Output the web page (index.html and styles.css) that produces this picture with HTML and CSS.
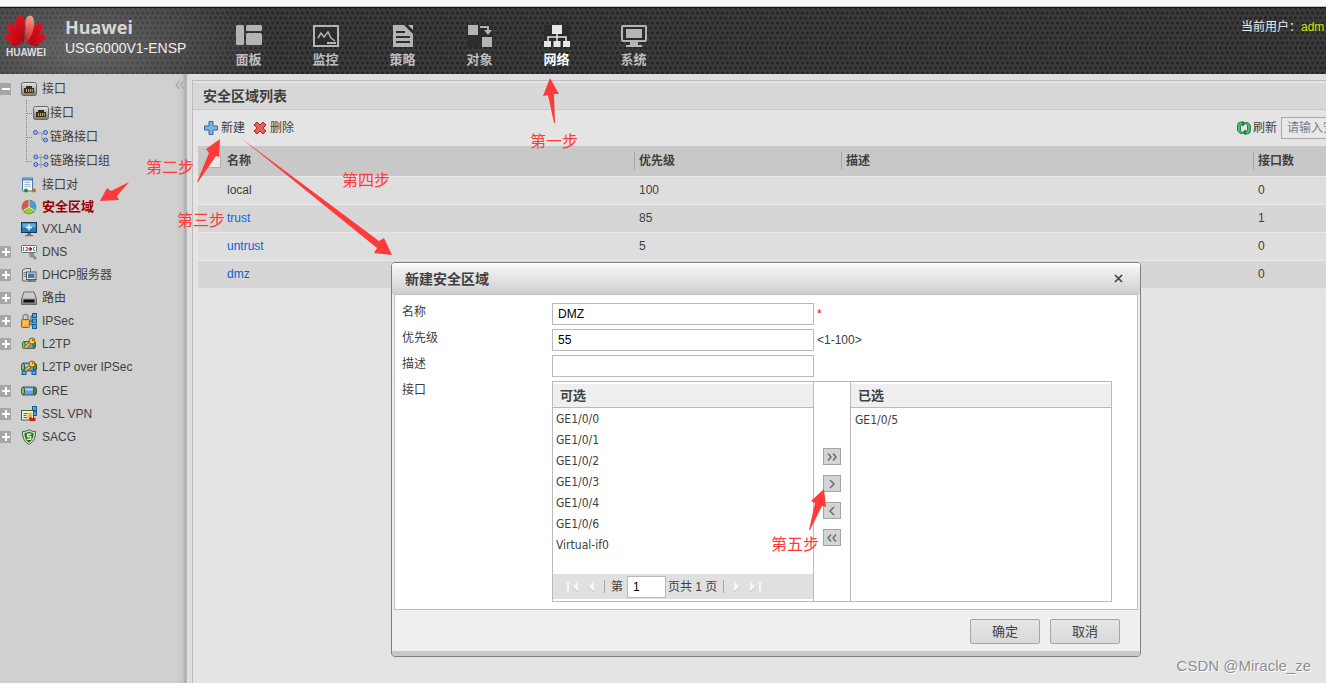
FILE: index.html
```html
<!DOCTYPE html>
<html lang="zh-CN">
<head>
<meta charset="utf-8">
<title>USG6000V1-ENSP</title>
<link rel="stylesheet" href="styles.css">
</head>
<body>
<svg class="defs" aria-hidden="true">
  <defs>
    <linearGradient id="petal" x1="0" y1="0" x2="0" y2="1"><stop offset="0" stop-color="#e01420"/><stop offset="1" stop-color="#b8000e"/></linearGradient>
    <linearGradient id="petal-light" x1="0" y1="0" x2="0" y2="1"><stop offset="0" stop-color="#f2a08c"/><stop offset="1" stop-color="#d01820"/></linearGradient>
    <linearGradient id="metal" x1="0" y1="0" x2="0" y2="1"><stop offset="0" stop-color="#e8e8e8"/><stop offset="1" stop-color="#777"/></linearGradient>
    <symbol id="i-port" viewBox="0 0 16 16"><rect x=".5" y="1.500" width="15" height="13" rx="2" fill="url(#metal)" stroke="#666"/><path d="M3 12V7h2V5h6v2h2v5z" fill="#33302a"/><path d="M5.500 8v3M7.500 8v3M9.500 8v3M11.300 8v3" stroke="#dca53a"/></symbol>
    <symbol id="i-link" viewBox="0 0 16 16"><path d="M5 4h4v7h3" fill="none" stroke="#999"/><g fill="#9db5ee" stroke="#3a5cab"><circle cx="2.500" cy="3.500" r="2"/><circle cx="12.500" cy="3.500" r="2"/><circle cx="12.500" cy="11" r="2"/></g></symbol>
    <symbol id="i-linkgroup" viewBox="0 0 16 16"><path d="M5 4.500h6M5 11.500h6M8 1v14" fill="none" stroke="#999"/><g fill="#9db5ee" stroke="#3a5cab"><circle cx="2.800" cy="4" r="2"/><circle cx="13" cy="4" r="2"/><circle cx="2.800" cy="11.500" r="2"/><circle cx="13" cy="11.500" r="2"/></g></symbol>
    <symbol id="i-pair" viewBox="0 0 16 16"><path d="M1.500 1h10v13h-10z" fill="#f4f8fd" stroke="#4a7ab5"/><path d="M2 2.500h9" stroke="#4a8ad0" stroke-width="2"/><path d="M3.500 5.500h6M3.500 7.500h6M3.500 9.500h6" stroke="#a9b4c2"/><path d="M5 13.500h7" stroke="#aaa"/><circle cx="5" cy="13.500" r="2" fill="#19951d"/><circle cx="13" cy="13.500" r="2" fill="#d8620c"/></symbol>
    <symbol id="i-pie" viewBox="0 0 16 16"><circle cx="8" cy="8" r="7.300" fill="#6d7f55"/><path d="M8 8V1.500a6.500 6.500 0 0 1 5.600 9.800z" fill="#39a0dc"/><path d="M8 8V1.500A6.500 6.500 0 0 0 2.400 11.300z" fill="#ec4f3c"/><path d="M8 8l5.600 3.300a6.500 6.500 0 0 1-11.200 0z" fill="#9acb33"/><path d="M8 1v7l6 3.500M8 8l-6 3.500" stroke="#eee" stroke-width=".8" fill="none"/></symbol>
    <symbol id="i-screen" viewBox="0 0 16 16"><rect x=".5" y="1.500" width="15" height="10" fill="#2479bd" stroke="#17384f"/><path d="M1.500 2.500h13v4h-13z" fill="#5faee2"/><path d="M8 3.500v6M5 6.500h6" stroke="#fff" stroke-width="1.400"/><path d="M6 12h4v2h2v1.300H4V14h2z" fill="#777"/></symbol>
    <symbol id="i-dns" viewBox="0 0 16 16"><rect x=".5" y="1.500" width="15" height="7" rx="1" fill="#fff" stroke="#5f7380"/><path d="M2.500 3v4M4.500 3.500h2v1.500l-2 1.500h2.500" stroke="#3682b0" fill="none"/><path d="M7 5h3M9 3.200L11 5 9 6.800z" stroke="#c01020" fill="#c01020"/><path d="M14 3.500h-1.500v3H14" stroke="#4a9a22" fill="none"/><path d="M8 9h5v2l3 3-2 2-3-3-2 1z" fill="#88919b"/></symbol>
    <symbol id="i-dhcp" viewBox="0 0 16 16"><path d="M1.500 3l3-1.500h5V14h-8z" fill="#d8dadb" stroke="#666"/><path d="M2.500 5.500h3M2.500 7.500h3M2.500 9.500h3" stroke="#777"/><rect x="5.500" y="5" width="9.500" height="7.500" fill="#e7e7e7" stroke="#555"/><rect x="7" y="6.500" width="6.500" height="4.500" fill="#3e78ae"/><path d="M7 14h8" stroke="#666" stroke-width="1.500"/></symbol>
    <symbol id="i-router" viewBox="0 0 16 16"><path d="M3 2h10l2.500 7v5.500H.5V9z" fill="url(#metal)" stroke="#666"/><path d="M3.500 3h9l1.500 5H2z" fill="#ccc"/><path d="M2.500 9.500h11v3h-11z" fill="#111"/></symbol>
    <symbol id="i-ipsec" viewBox="0 0 16 16"><path d="M2 7V4a2.500 2.500 0 0 1 5 0v3" fill="none" stroke="#8b8b8b" stroke-width="1.600"/><rect x=".5" y="6.500" width="8" height="8" rx="1" fill="#efac3c" stroke="#9a6416"/><path d="M2 9h5M2 11h5" stroke="#fbd58a"/><path d="M9 8h2M12 3h-2v9h2" stroke="#456" fill="none"/><g fill="#48a8e0" stroke="#175f92"><rect x="11.500" y=".5" width="4" height="4"/><rect x="11.500" y="6" width="4" height="4"/><rect x="11.500" y="11.500" width="4" height="4"/></g></symbol>
    <symbol id="i-tube" viewBox="0 0 16 16"><path d="M2 4h12v8H2z" fill="#6d9fd4" stroke="#37557b"/><path d="M3 5.500h10v2H3z" fill="#b4d2f0"/><ellipse cx="2" cy="8" rx="1.600" ry="4" fill="#8cc078" stroke="#2c5d2c"/><ellipse cx="14" cy="8" rx="1.600" ry="4" fill="#4c8b45" stroke="#2c5d2c"/></symbol>
    <symbol id="i-key" viewBox="0 0 16 16"><path d="M4 12l7-6.500" stroke="#8c5d08" stroke-width="3.400"/><path d="M4 12l7-6.500" stroke="#f3be3b" stroke-width="1.800"/><circle cx="11" cy="5" r="3" fill="#f5cb55" stroke="#8c5d08"/><circle cx="11.800" cy="4.200" r=".9" fill="#8c5d08"/></symbol>
    <symbol id="i-l2tp" viewBox="0 0 16 16"><svg y="2" width="16" height="14"><use href="#i-tube"/></svg><use href="#i-key"/></symbol>
    <symbol id="i-l2tpipsec" viewBox="0 0 16 16"><use href="#i-tube"/><use href="#i-key"/><path d="M3 10v2M13 10v2" stroke="#456"/><g fill="#4cb0e4" stroke="#176393"><rect x="1" y="12" width="4" height="3.500"/><rect x="11" y="12" width="4" height="3.500"/></g></symbol>
    <symbol id="i-sslvpn" viewBox="0 0 16 16"><g fill="#48a8e0" stroke="#175f92"><rect x="11.500" y=".5" width="4" height="4"/><rect x="11.500" y="5.500" width="4" height="4"/></g><rect x=".5" y="4.500" width="12" height="9.500" fill="#eef5e5" stroke="#2d6b32"/><path d="M2.500 7.500h4M2.500 9.500h3M2.500 11.500h4" stroke="#3e7a3c"/><circle cx="9" cy="9" r="2.500" fill="#f3b52c"/><path d="M7.500 12l2-1 3 1.500 2-1v3l-2 1-1.500-1-1.500 1z" fill="#cc1c12"/></symbol>
    <symbol id="i-shield" viewBox="0 0 16 16"><path d="M8 .7C5.500 2.300 3.500 2.600 1.500 2.600 1.500 9 3.500 13 8 15.400 12.500 13 14.500 9 14.500 2.600 12.500 2.600 10.500 2.300 8 .7z" fill="#e4eadf" stroke="#4b554a"/><path d="M8 2.500c-1.800 1-3.200 1.400-4.700 1.500C3.500 9 5 12 8 13.800 11 12 12.500 9 12.700 4 11.200 3.900 9.800 3.500 8 2.500z" fill="#23781b"/><path d="M10.200 5.200H6.600v2.400h3v2.600H5.900" fill="none" stroke="#dff0c8" stroke-width="1.500"/></symbol>
  </defs>
</svg>

<div class="strip"></div>
<header class="topbar">
  <div class="brand">
    <svg class="logo" viewBox="0 0 40 31" aria-hidden="true">
      <g fill="url(#petal)">
        <path transform="translate(19 28) rotate(-8)" d="M0 0C-7-9-7-24-2-27.500 2-28 4-25 3.500-20z"/>
        <path transform="translate(17.500 28) rotate(-32)" d="M0 0C-6-8-7-19-3-24 0-25 3-22 3-17z"/>
        <path transform="translate(16.500 29) rotate(-60)" d="M0 0C-5-6-6-15-2-19 1-19 3-16 3-12z"/>
        <path transform="translate(22.500 28) rotate(32)" d="M0 0C6-8 7-19 3-24 0-25-3-22-3-17z"/>
        <path transform="translate(23.500 29) rotate(60)" d="M0 0C5-6 6-15 2-19-1-19-3-16-3-12z"/>
        <path d="M16 30H5c1.500 1 4 1.500 6 .5zM24 30h11c-1.500 1-4 1.500-6 .5z"/>
        <path d="M16 29.500C11 28 7 27 4 26c1 4 5 6 12 3.500zM24 29.500c5-1.500 9-2.500 12-3.500-1 4-5 6-12 3.500z"/>
      </g>
      <path transform="translate(21 28) rotate(8)" d="M0 0C7-9 7-24 2-27.500-2-28-4-25-3.500-20z" fill="url(#petal-light)"/>
    </svg>
    <span class="logo-text">HUAWEI</span>
  </div>
  <div class="product">
    <strong class="product-name">Huawei</strong>
    <span class="product-model">USG6000V1-ENSP</span>
  </div>
  <nav class="mainnav">
    <a class="nav-item" href="#"><svg class="nav-icon" viewBox="0 0 26 22"><g fill="#b4b4b4"><rect width="8" height="20" rx="1.500"/><rect x="10" width="16" height="6" rx="1.500"/><rect x="10" y="8" width="16" height="12" rx="1.500"/></g></svg>面板</a>
    <a class="nav-item" href="#"><svg class="nav-icon" viewBox="0 0 26 22"><rect x="1" y="1" width="24" height="20" fill="#2c2c2c" stroke="#b4b4b4" stroke-width="2"/><path d="M5 13l3-5 3 4 4-5 3 6 4 3" fill="none" stroke="#b4b4b4" stroke-width="1.500"/><path d="M14 18h9" stroke="#b4b4b4" stroke-width="2"/></svg>监控</a>
    <a class="nav-item" href="#"><svg class="nav-icon" viewBox="0 0 26 22"><path d="M3 0h20v22H3z" fill="#2c2c2c"/><path d="M3 0h11l9 9v13H3z" fill="#b4b4b4"/><path d="M6 7h9M6 12h14M6 17h14" stroke="#2c2c2c" stroke-width="2"/><path d="M18 0h5v5z" fill="#b4b4b4"/></svg>策略</a>
    <a class="nav-item" href="#"><svg class="nav-icon" viewBox="0 0 26 22"><path d="M0 0h26v22H0z" fill="#2c2c2c"/><path d="M1 0h10v10H1zM15 12h10v10H15z" fill="#b4b4b4"/><path d="M13 2h8v4" fill="none" stroke="#b4b4b4" stroke-width="2"/><path d="M17 5h8l-4 5z" fill="#b4b4b4"/></svg>对象</a>
    <a class="nav-item nav-item-active" href="#"><svg class="nav-icon" viewBox="0 0 26 22"><path d="M0 0h26v22H0z" fill="#2c2c2c"/><path d="M8 0h10v9H8zM0 16h7v6H0zM9.500 16h7v6h-7zM19 16h7v6h-7z" fill="#e6e6e6"/><path d="M13 9v7M4 16v-4h18v4" fill="none" stroke="#e6e6e6" stroke-width="1.500"/></svg>网络</a>
    <a class="nav-item" href="#"><svg class="nav-icon" viewBox="0 0 26 22"><rect x="1" y="1" width="24" height="15" rx="1" fill="#2c2c2c" stroke="#b4b4b4" stroke-width="2"/><path d="M5 4h16v9H5zM9 17h8v3h4v2H5v-2h4z" fill="#b4b4b4"/></svg>系统</a>
  </nav>
  <div class="user">当前用户：<span class="user-name">adm</span></div>
</header>

<div class="workspace">
  <aside class="sidebar">
    <ul class="tree">
      <li class="node"><span class="toggle toggle-open"></span><svg class="icon"><use href="#i-port"/></svg>接口</li>
      <li>
        <ul class="subtree">
          <li class="child"><svg class="icon"><use href="#i-port"/></svg>接口</li>
          <li class="child"><svg class="icon"><use href="#i-link"/></svg>链路接口</li>
          <li class="child"><svg class="icon"><use href="#i-linkgroup"/></svg>链路接口组</li>
        </ul>
      </li>
      <li class="node leaf"><svg class="icon"><use href="#i-pair"/></svg>接口对</li>
      <li class="node leaf selected"><svg class="icon"><use href="#i-pie"/></svg>安全区域</li>
      <li class="node leaf"><svg class="icon"><use href="#i-screen"/></svg>VXLAN</li>
      <li class="node"><span class="toggle"></span><svg class="icon"><use href="#i-dns"/></svg>DNS</li>
      <li class="node"><span class="toggle"></span><svg class="icon"><use href="#i-dhcp"/></svg>DHCP服务器</li>
      <li class="node"><span class="toggle"></span><svg class="icon"><use href="#i-router"/></svg>路由</li>
      <li class="node"><span class="toggle"></span><svg class="icon"><use href="#i-ipsec"/></svg>IPSec</li>
      <li class="node"><span class="toggle"></span><svg class="icon"><use href="#i-l2tp"/></svg>L2TP</li>
      <li class="node leaf leaf-tall"><svg class="icon"><use href="#i-l2tpipsec"/></svg>L2TP over IPSec</li>
      <li class="node"><span class="toggle"></span><svg class="icon"><use href="#i-tube"/></svg>GRE</li>
      <li class="node"><span class="toggle"></span><svg class="icon"><use href="#i-sslvpn"/></svg>SSL VPN</li>
      <li class="node"><span class="toggle"></span><svg class="icon"><use href="#i-shield"/></svg>SACG</li>
    </ul>
    <button class="collapse" type="button" aria-label="收起"><svg viewBox="0 0 10 10"><path d="M4.500 1L1 5l3.500 4M9 1L5.500 5 9 9" fill="none" stroke="#aaa" stroke-width="1.300"/></svg></button>
  </aside>

  <main class="panel">
    <h1 class="panel-title">安全区域列表</h1>
    <div class="toolbar">
      <button class="tool" type="button"><svg class="tool-icon" viewBox="0 0 14 14"><path d="M5 .5h4V5h4.500v4H9v4.500H5V9H.5V5H5z" fill="#7fb2dd" stroke="#356a9d"/></svg>新建</button>
      <button class="tool" type="button"><svg class="tool-icon" viewBox="0 0 14 14"><path d="M4 1l3 3 3-3 3 3-3 3 3 3-3 3-3-3-3 3-3-3 3-3-3-3z" fill="#e0605a" stroke="#a32826"/></svg>删除</button>
      <button class="tool tool-right" type="button"><svg class="tool-icon" viewBox="0 0 14 14"><g fill="#4fb873" stroke="#17783a" stroke-width=".9"><path d="M6.500 1H4Q.5 1 .5 5v4.500L3 12.500h2.500L3.500 9.500V5.500Q3.500 4 5 4h1.500z"/><path d="M7.500 13H10q3.500 0 3.500-4V4.500L11 1.500H8.500l2 3v4q0 1.500-1.500 1.500H7.500z"/></g><path d="M5.500 0v5.500L9 2.500zM8.500 14V8.500L5 11.500z" fill="#17783a"/></svg>刷新</button>
      <input class="search" type="text" aria-label="搜索" placeholder="请输入安全区域名称">
    </div>
    <table class="zones">
      <thead>
        <tr><th class="col-check"><input class="check" type="checkbox" aria-label="全选"></th><th class="col-name">名称</th><th class="col-priority divided">优先级</th><th class="divided">描述</th><th class="col-count divided">接口数</th></tr>
      </thead>
      <tbody>
        <tr><td></td><td>local</td><td>100</td><td></td><td>0</td></tr>
        <tr><td></td><td><a href="#">trust</a></td><td>85</td><td></td><td>1</td></tr>
        <tr><td></td><td><a href="#">untrust</a></td><td>5</td><td></td><td>0</td></tr>
        <tr><td></td><td><a href="#">dmz</a></td><td></td><td></td><td>0</td></tr>
      </tbody>
    </table>
  </main>
</div>

<section class="dialog" role="dialog" aria-labelledby="dialog-title">
  <div class="dialog-head">
    <h2 class="dialog-title" id="dialog-title">新建安全区域</h2>
    <button class="close" type="button" aria-label="关闭"><svg viewBox="0 0 9 9"><path d="M1 1l7 7M8 1L1 8" stroke="#444" stroke-width="1.700"/></svg></button>
  </div>
  <form class="dialog-body">
    <div class="field"><label class="label" for="f-name">名称</label><input class="text" id="f-name" type="text" value="DMZ"><span class="required">*</span></div>
    <div class="field"><label class="label" for="f-prio">优先级</label><input class="text" id="f-prio" type="text" value="55"><span class="hint">&lt;1-100&gt;</span></div>
    <div class="field"><label class="label" for="f-desc">描述</label><input class="text" id="f-desc" type="text"></div>
    <div class="field">
      <span class="label">接口</span>
      <div class="transfer">
        <div class="box">
          <h3 class="box-title">可选</h3>
          <ul class="ports"><li>GE1/0/0</li><li>GE1/0/1</li><li>GE1/0/2</li><li>GE1/0/3</li><li>GE1/0/4</li><li>GE1/0/6</li><li>Virtual-if0</li></ul>
          <div class="pager">
            <button class="page-btn" type="button" aria-label="首页"><svg viewBox="0 0 12 12"><path d="M1 1v10" stroke="#f6f6f6" stroke-width="2"/><path d="M11 1v10L5 6z" fill="#f6f6f6"/><path d="M5 6l6 5" stroke="#bbb"/></svg></button>
            <button class="page-btn" type="button" aria-label="上一页"><svg viewBox="0 0 12 12"><path d="M9 1v10L3 6z" fill="#f6f6f6"/><path d="M3 6l6 5" stroke="#bbb"/></svg></button>
            <span class="bar"></span>
            <label for="f-page">第</label><input class="page-no" id="f-page" type="text" value="1"><span>页共 1 页</span>
            <span class="bar"></span>
            <button class="page-btn" type="button" aria-label="下一页"><svg viewBox="0 0 12 12"><path d="M3 1v10l6-5z" fill="#f6f6f6"/><path d="M3 11l6-5" stroke="#bbb"/></svg></button>
            <button class="page-btn" type="button" aria-label="末页"><svg viewBox="0 0 12 12"><path d="M11 1v10" stroke="#f6f6f6" stroke-width="2"/><path d="M1 1v10l6-5z" fill="#f6f6f6"/><path d="M1 11l6-5" stroke="#bbb"/></svg></button>
          </div>
        </div>
        <div class="movers">
          <button class="move" type="button" aria-label="全部添加"><svg viewBox="0 0 12 10"><path d="M2 1.500L5 5 2 8.500M7 1.500L10 5 7 8.500"/></svg></button>
          <button class="move" type="button" aria-label="添加"><svg viewBox="0 0 12 10"><path d="M4 1l4 4-4 4"/></svg></button>
          <button class="move" type="button" aria-label="移除"><svg viewBox="0 0 12 10"><path d="M8 1L4 5l4 4"/></svg></button>
          <button class="move" type="button" aria-label="全部移除"><svg viewBox="0 0 12 10"><path d="M5 1.500L2 5l3 3.500M10 1.500L7 5l3 3.500"/></svg></button>
        </div>
        <div class="box">
          <h3 class="box-title">已选</h3>
          <ul class="ports ports-chosen"><li>GE1/0/5</li></ul>
        </div>
      </div>
    </div>
  </form>
  <div class="dialog-foot">
    <button class="btn" type="button">确定</button>
    <button class="btn" type="button">取消</button>
  </div>
</section>

<svg class="arrows" aria-hidden="true">
  <path d="M550 78l9 16-5 0 1 29h-1l-6-28-5 1z"/>
  <path d="M100 201l7-13 4 3 18-9-12 14 2 4z"/>
  <path d="M220 139l-1 18-3-1-18 26h-1l12-29-3-4z"/>
  <path d="M241 138l138 103 5-3 8 17-18-2 3-5z"/>
  <path d="M824 489l2 18-4-1-12 24h-1l6-27-4-2z"/>
</svg>
<span class="step step-1">第一步</span>
<span class="step step-2">第二步</span>
<span class="step step-3">第三步</span>
<span class="step step-4">第四步</span>
<span class="step step-5">第五步</span>
<span class="watermark">CSDN @Miracle_ze</span>
</body>
</html>
```

FILE: styles.css
```css
* { box-sizing: border-box; }

body {
  margin: 0;
  height: 100vh;
  overflow: hidden;
  position: relative;
  display: flex;
  flex-direction: column;
  background: #dedede;
  color: #404040;
  font: 12px/16px "Liberation Sans", "Noto Sans CJK SC", sans-serif;
}

h1, h2, h3, ul { margin: 0; padding: 0; }
ul { list-style: none; }
button, input { font: inherit; color: inherit; }
button { border: 0; padding: 0; background: none; }
a { text-decoration: none; }
svg { display: block; flex: none; }
.defs { position: absolute; width: 0; height: 0; }

/* Top bar */
.strip { height: 7px; flex: none; background: #f8f9fc; border-bottom: 1px solid #c4c4c4; }

.topbar {
  flex: none;
  height: 67px;
  display: flex;
  overflow: hidden;
  border-top: 1px solid #151515;
  background:
    radial-gradient(ellipse 190px 90px at 80px 40px, rgba(150, 150, 150, .5), rgba(150, 150, 150, 0)),
    radial-gradient(circle, #242424 1px, transparent 2px) 0 0 / 5px 10px,
    radial-gradient(circle, #242424 1px, transparent 2px) 3px 5px / 5px 10px,
    #3a3a3b;
}

.brand { width: 65px; padding: 7px 0 0 5px; }
.logo { width: 40px; height: 31px; }
.logo-text { display: block; width: 42px; text-align: center; font-size: 10px; line-height: 14px; font-weight: bold; color: #ddd; }
.product { width: 155px; padding-top: 7px; white-space: nowrap; }
.product-name { display: block; font: bold 18px/24px "Noto Sans", sans-serif; color: #d6d6d6; }
.product-model { display: block; font-size: 14px; line-height: 18px; color: #eee; }

.mainnav { display: flex; flex: 1; }
.nav-item {
  width: 77px;
  flex: none;
  display: flex;
  flex-direction: column;
  align-items: center;
  gap: 4px;
  padding: 17px 20px 0 0;
  font-size: 13px;
  line-height: 18px;
  font-weight: bold;
  color: #bebebe;
}
.nav-item-active { color: #fff; }
.nav-icon { width: 26px; height: 22px; }
.user { flex: none; width: 85px; padding-top: 11px; color: #eee; white-space: nowrap; }
.user-name { color: #d2e000; }

/* Sidebar */
.workspace { flex: 1; display: flex; min-height: 0; }
.sidebar {
  flex: none;
  width: 187px;
  display: flex;
  justify-content: space-between;
  align-items: flex-start;
  padding-top: 3px;
  background: linear-gradient(to right, #d0d0d0 175px, #c8c8c8 183px, #b4b4b4 184px);
}
.tree { flex: 1; }
.node { height: 23px; display: flex; align-items: center; gap: 5px; white-space: nowrap; }
.leaf { height: 22px; padding-left: 21px; }
.leaf-tall { height: 24px; }
.icon { width: 16px; height: 16px; }
.selected { color: #900; font-size: 13px; font-weight: bold; }
.toggle {
  flex: none;
  width: 11px;
  height: 12px;
  margin-right: 5px;
  background:
    linear-gradient(#fff, #fff) 50% 50% / 8px 2px no-repeat,
    linear-gradient(#fff, #fff) 50% 50% / 2px 8px no-repeat,
    #a4a6a8;
}
.toggle-open { background: linear-gradient(#fff, #fff) 50% 50% / 8px 2px no-repeat, #a4a6a8; }
.subtree { margin: 0 0 12px 26px; height: 62px; padding-top: 1px; border-left: 1px dotted #888; }
.child { height: 24px; display: flex; align-items: center; gap: 1px; white-space: nowrap; }
.child::before { content: ""; width: 5px; border-top: 1px dotted #888; }
.collapse { width: 10px; height: 16px; margin-right: 2px; display: flex; align-items: center; }
.collapse svg { width: 10px; height: 10px; }

/* List panel */
.panel {
  flex: 1;
  min-width: 0;
  margin: 6px 0 0 5px;
  padding-top: 2px;
  border: 1px solid #bcbcbc;
  border-width: 1px 0 0 1px;
  background: #e4e4e4;
}
.panel-title { height: 27px; padding-left: 10px; font-size: 14px; line-height: 26px; background: #d8d8d8; border-bottom: 1px solid #c8c8c8; }
.toolbar { height: 36px; display: flex; align-items: center; gap: 8px; padding-left: 11px; overflow: hidden; }
.tool { display: flex; align-items: center; gap: 3px; white-space: nowrap; }
.tool-icon { width: 14px; height: 14px; }
.tool-right { gap: 2px; margin-left: auto; margin-right: -4px; }
.search { flex: none; width: 150px; height: 22px; margin-right: -105px; padding: 0 5px; border: 1px solid #aaa; background: #e8e8e8; }
.search::placeholder { color: #808080; opacity: 1; }

.zones { width: calc(100% - 5px); margin-left: 5px; border-collapse: separate; border-spacing: 0; table-layout: fixed; text-align: left; }
.zones th { height: 31px; padding: 0 5px; background-color: #c8c8c8; border-bottom: 1px solid #e8e8e8; }
.zones td { height: 28px; padding: 0 5px 1px; background: #dedede; border-bottom: 1px solid #e8e8e8; }
.zones tr:nth-child(even) td { background: #d6d6d6; }
.zones a { color: #0b62dc; }
.zones .divided { background: linear-gradient(#a8a8a8, #a8a8a8) 0 50% / 1px 18px no-repeat #c8c8c8; }
.zones .col-check { width: 24px; padding: 0; }
.col-name { width: 412px; }
.col-priority { width: 207px; }
.col-count { width: 73px; }
.check { appearance: none; display: block; width: 13px; height: 13px; margin: 0 0 0 10px; border: 1px solid #b0b0b0; background: #e8e8e8; }

/* Dialog window */
.dialog {
  position: absolute;
  left: 391px;
  top: 262px;
  width: 750px;
  border: 1px solid #808080;
  border-radius: 4px;
  background: #efefef;
  overflow: hidden;
}
.dialog-head { height: 31px; display: flex; align-items: center; justify-content: space-between; padding: 0 17px 0 13px; background: linear-gradient(#fff, #f0f0f0 20%, #cfcfcf); }
.dialog-title { font-size: 14px; line-height: 20px; }
.close { width: 9px; height: 9px; }
.dialog-body { margin: 0 2px; padding: 8px 7px 7px; border: 1px solid #bdbdc1; background: #fff; }
.field { display: flex; align-items: flex-start; gap: 3px; margin-bottom: 4px; }
.field:last-child { margin-bottom: 0; }
.label { width: 147px; flex: none; line-height: 18px; }
.text { width: 262px; height: 22px; padding: 0 5px; border: 1px solid #b9b9be; background: #fff; color: #000; }
.required { color: #f00; line-height: 22px; }
.hint { line-height: 22px; }

.transfer { flex: none; display: flex; width: 560px; border: 1px solid #b9b9be; border-width: 1px 0; }
.box { width: 262px; height: 219px; display: flex; flex-direction: column; padding-top: 2px; border: 1px solid #b9b9be; border-width: 0 1px; }
.box-title { height: 24px; padding-left: 7px; font-size: 13px; line-height: 23px; background: #efefef; border-bottom: 1px solid #b9b9be; }
.ports { flex: 1; padding: 1px 0 0 3px; font-family: "DejaVu Sans Condensed", "Noto Sans", sans-serif; line-height: 21px; }
.ports-chosen { padding: 2px 0 0 4px; }
.movers { flex: 1; display: flex; flex-direction: column; align-items: center; gap: 10px; padding-top: 66px; }
.move { width: 18px; height: 17px; display: flex; align-items: center; justify-content: center; border: 1px solid #a2a4ab; background: #d3d4d6; }
.move svg { width: 12px; height: 10px; fill: none; stroke: #6c6f78; stroke-width: 1.500; }

.pager { height: 25px; margin-bottom: 2px; padding-left: 13px; display: flex; align-items: center; gap: 4px; background: #e0e0e0; white-space: nowrap; }
.page-btn { width: 14px; padding: 0 1px; }
.page-btn svg { width: 12px; height: 12px; }
.bar { width: 1px; height: 13px; margin: 0 2px; background: #aaa; }
.page-no { width: 39px; height: 22px; margin-right: -2px; padding: 0 5px; border: 1px solid #b9b9be; background: #fff; color: #000; }

.dialog-foot { display: flex; justify-content: flex-end; gap: 10px; padding: 9px 20px 7px; border-bottom: 5px solid #c8c8c8; }
.btn { width: 70px; height: 25px; font-size: 13px; border: 1px solid #a6a6aa; border-radius: 2px; background: linear-gradient(#e6e6e6, #d9d9d9); }

/* Step notes laid over the page */
.arrows { position: absolute; left: 0; top: 0; width: 100%; height: 100%; fill: #ff3a3a; pointer-events: none; }
.step { position: absolute; font-size: 16px; line-height: 20px; color: #ff3a3a; white-space: nowrap; }
.step-1 { left: 530px; top: 132px; }
.step-2 { left: 146px; top: 158px; }
.step-3 { left: 177px; top: 211px; }
.step-4 { left: 342px; top: 171px; }
.step-5 { left: 771px; top: 535px; }
.watermark { position: absolute; right: 15px; bottom: 7px; font-size: 15px; line-height: 20px; color: #8e8e8e; text-shadow: 1px 1px 0 #fff; }
```
